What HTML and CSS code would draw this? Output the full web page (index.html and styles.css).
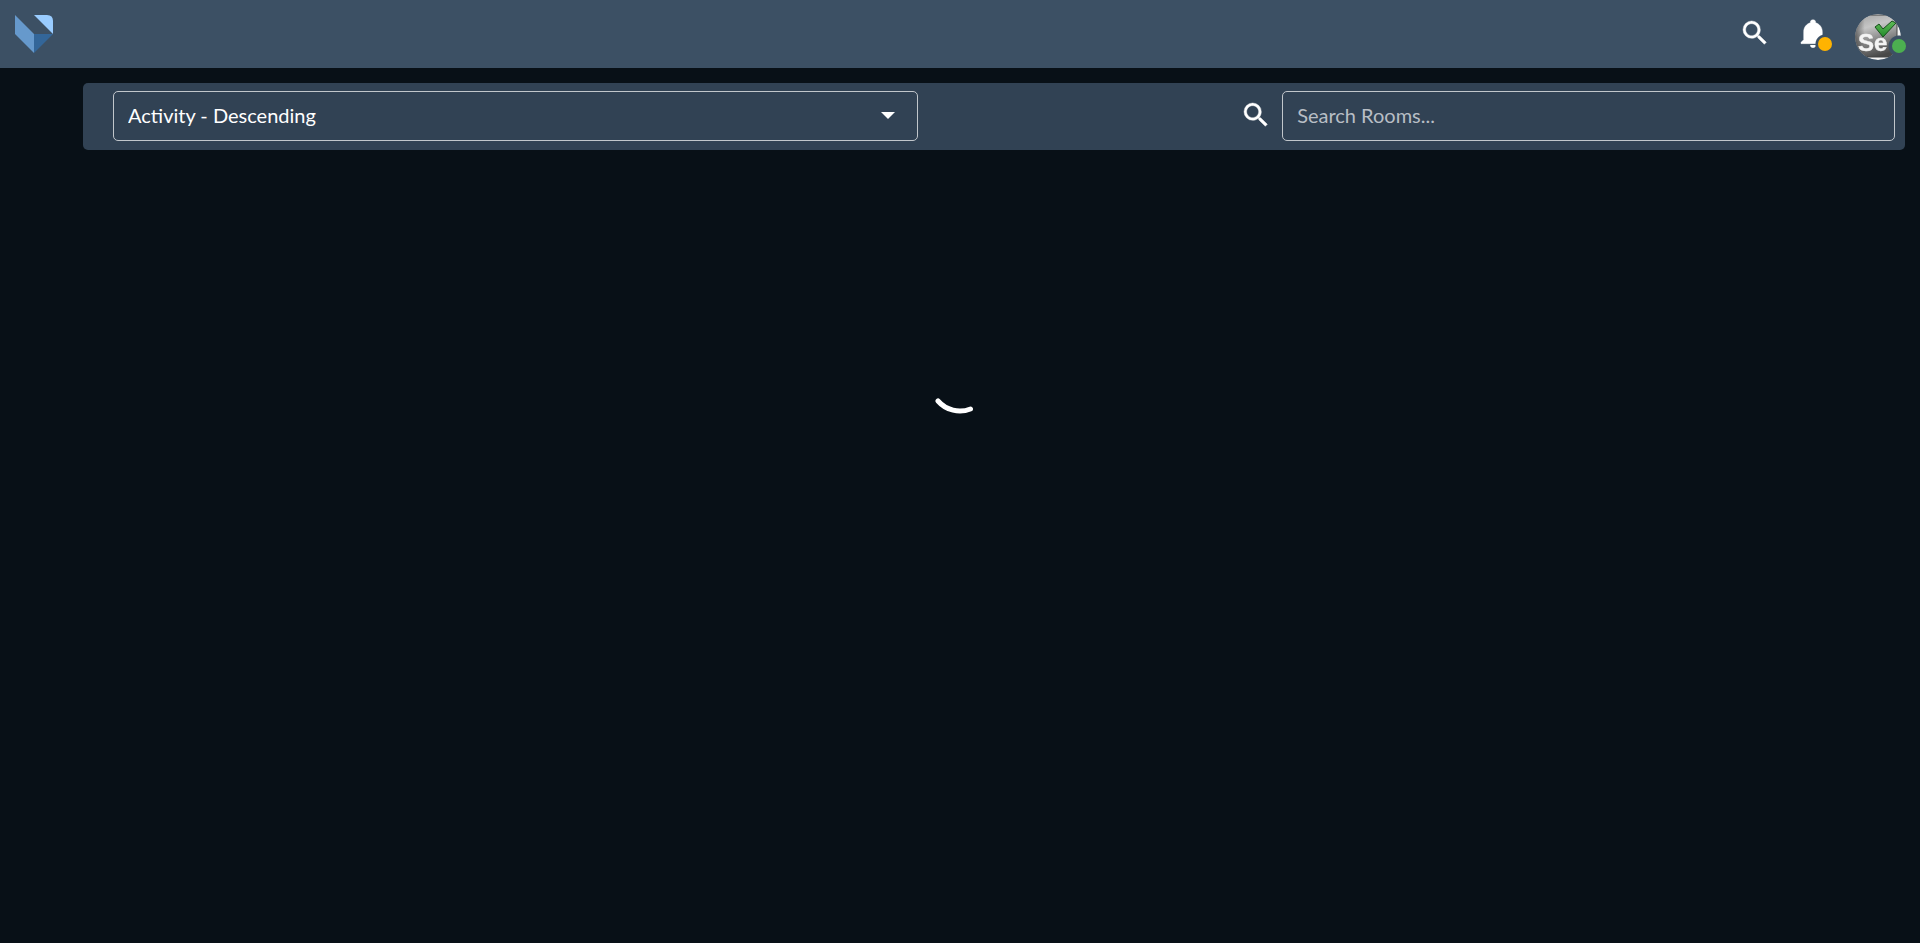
FILE: index.html
```html
<!DOCTYPE html>
<html lang="en">
<head>
<meta charset="utf-8">
<meta name="viewport" content="width=device-width, initial-scale=1">
<title>Rooms</title>
<link rel="stylesheet" href="styles.css">
</head>
<body>
<header class="topbar">
  <a class="logo" href="#" aria-label="Home">
    <svg width="38" height="38" viewBox="0 0 38 38" aria-hidden="true">
      <path fill="#6699cc" d="M0 0 19 19V38L0 19Z"/>
      <path fill="#336699" d="M19 19H38L19 38Z"/>
      <path fill="#99ccff" d="M19 0H32Q38 0 38 6V19Z"/>
    </svg>
  </a>
  <nav class="actions" aria-label="Account">
    <button class="icon-button" type="button" aria-label="Search">
      <svg class="icon" viewBox="0 0 24 24" aria-hidden="true"><path d="M9.500 3A6.500 6.500 0 0 1 16 9.500C16 11.110 15.410 12.590 14.440 13.730L14.710 14H15.500L20.500 19L19 20.500L14 15.500V14.710L13.730 14.440C12.590 15.410 11.110 16 9.500 16A6.500 6.500 0 0 1 3 9.500A6.500 6.500 0 0 1 9.500 3M9.500 5C7 5 5 7 5 9.500C5 12 7 14 9.500 14C12 14 14 12 14 9.500C14 7 12 5 9.500 5Z"/></svg>
    </button>
    <button class="icon-button" type="button" aria-label="Notifications">
      <svg class="icon icon-bell" viewBox="0 0 24 24" aria-hidden="true"><path d="M21 19V20H3V19L5 17V11C5 7.900 7.030 5.170 10 4.290C10 4.190 10 4.100 10 4A2 2 0 0 1 12 2A2 2 0 0 1 14 4C14 4.100 14 4.190 14 4.290C16.970 5.170 19 7.900 19 11V17L21 19M14 21A2 2 0 0 1 12 23A2 2 0 0 1 10 21"/></svg>
      <span class="badge badge-alert"></span>
    </button>
    <button class="icon-button profile" type="button" aria-label="Profile, online">
      <svg class="avatar" viewBox="0 0 46 46" aria-hidden="true">
        <defs>
          <linearGradient id="metal" x1="0.2" y1="0" x2="0.5" y2="1">
            <stop offset="0" stop-color="#a8a8a8"/>
            <stop offset="0.3" stop-color="#c6c6c6"/>
            <stop offset="0.6" stop-color="#8c8c8c"/>
            <stop offset="1" stop-color="#484848"/>
          </linearGradient>
          <linearGradient id="edge" x1="0" y1="0" x2="1" y2="0">
            <stop offset="0" stop-color="#333" stop-opacity="0.7"/>
            <stop offset="0.25" stop-color="#333" stop-opacity="0"/>
          </linearGradient>
          <linearGradient id="tick" x1="0" y1="0" x2="0" y2="1">
            <stop offset="0" stop-color="#62bd58"/>
            <stop offset="1" stop-color="#228a2b"/>
          </linearGradient>
        </defs>
        <rect width="46" height="46" fill="#f4f4f4"/>
        <rect x="-1" y="1" width="43" height="42" rx="5" fill="url(#metal)" stroke="#444" stroke-width="1"/>
        <rect x="-1" y="1" width="43" height="42" rx="5" fill="url(#edge)"/>
        <text class="avatar-text" x="3" y="37">Se</text>
        <path d="M20 13 24 10 28 15 37 7 41 9 28 23Z" fill="url(#tick)" stroke="#174f1b" stroke-width="1" stroke-linejoin="round"/>
      </svg>
      <span class="badge badge-online"></span>
    </button>
  </nav>
</header>

<main class="content">
  <form class="toolbar">
    <div class="sort">
      <select class="field" aria-label="Sort rooms">
        <option>Activity - Descending</option>
        <option>Activity - Ascending</option>
      </select>
      <svg class="caret" width="14" height="7" viewBox="0 0 14 7" aria-hidden="true"><path d="M0 0H14L7 7Z"/></svg>
    </div>
    <div class="search">
      <label for="room-search" aria-label="Search Rooms">
        <svg class="icon" viewBox="0 0 24 24" aria-hidden="true"><path d="M9.500 3A6.500 6.500 0 0 1 16 9.500C16 11.110 15.410 12.590 14.440 13.730L14.710 14H15.500L20.500 19L19 20.500L14 15.500V14.710L13.730 14.440C12.590 15.410 11.110 16 9.500 16A6.500 6.500 0 0 1 3 9.500A6.500 6.500 0 0 1 9.500 3M9.500 5C7 5 5 7 5 9.500C5 12 7 14 9.500 14C12 14 14 12 14 9.500C14 7 12 5 9.500 5Z"/></svg>
      </label>
      <input class="field" id="room-search" type="text" placeholder="Search Rooms...">
    </div>
  </form>
</main>

<div class="loading" role="status" aria-label="Loading">
  <svg width="64" height="64" viewBox="-32 -32 64 64" aria-hidden="true"><path d="M-22 19A29 29 0 0 0 10.500 27" fill="none" stroke="#fff" stroke-width="5" stroke-linecap="round"/></svg>
</div>
</body>
</html>
```
FILE: styles.css
```css
* {
  box-sizing: border-box;
}

body {
  margin: 0;
  min-height: 100vh;
  background: #081017;
  color: #fff;
  font-family: Lato, "Liberation Sans", sans-serif;
  font-size: 20px;
}

svg {
  display: block;
}

.topbar {
  display: flex;
  align-items: center;
  justify-content: space-between;
  height: 68px;
  padding: 0 19px 0 15px;
  background: #3c5064;
}

.actions {
  display: flex;
  align-items: center;
  gap: 26px;
}

.icon-button {
  position: relative;
  padding: 0 0 2px;
  border: 0;
  background: none;
  color: inherit;
}

.icon {
  width: 32px;
  height: 32px;
  fill: #fff;
  stroke: #fff;
  stroke-width: 0.3;
}

/* The status dots are separated from what they overlap by a clear ring. */
.icon-bell {
  mask: radial-gradient(circle at 28px 27px, transparent 9px, #000 10px);
}

.profile {
  padding: 5px 0 0;
}

.avatar {
  width: 46px;
  height: 46px;
  border-radius: 50%;
  mask: radial-gradient(circle at 44px 32px, transparent 10px, #000 11px);
}

.avatar-text {
  fill: #f4f4f4;
  stroke: #f4f4f4;
  stroke-width: 0.4;
  font: bold 24px "Liberation Sans", sans-serif;
}

.badge {
  position: absolute;
  width: 14px;
  height: 14px;
  border-radius: 50%;
}

.badge-alert {
  right: -3px;
  bottom: 0;
  background: #ffb300;
}

.badge-online {
  right: -5px;
  bottom: 7px;
  background: #4caf50;
}

.content {
  padding: 15px 15px 0 83px;
}

.toolbar {
  display: grid;
  grid-template-columns: 45.2% 36.75%;
  justify-content: space-between;
  padding: 8px 10px 9px 30px;
  border-radius: 5px;
  background: #314254;
}

.sort {
  position: relative;
}

.field {
  width: 100%;
  height: 50px;
  padding: 0 14px 3px;
  border: 1px solid #c1c6cb;
  border-radius: 5px;
  background: transparent;
  color: #fff;
  font: inherit;
  appearance: none;
}

.field option {
  background: #314254;
}

.field::placeholder {
  color: #b8bec5;
  opacity: 1;
}

.caret {
  position: absolute;
  top: 21px;
  right: 23px;
  fill: #fff;
  pointer-events: none;
}

.search {
  display: flex;
  align-items: center;
  gap: 10px;
}

.search label {
  padding-bottom: 2px;
}

.loading {
  display: flex;
  justify-content: center;
  padding-top: 200px;
}
```
